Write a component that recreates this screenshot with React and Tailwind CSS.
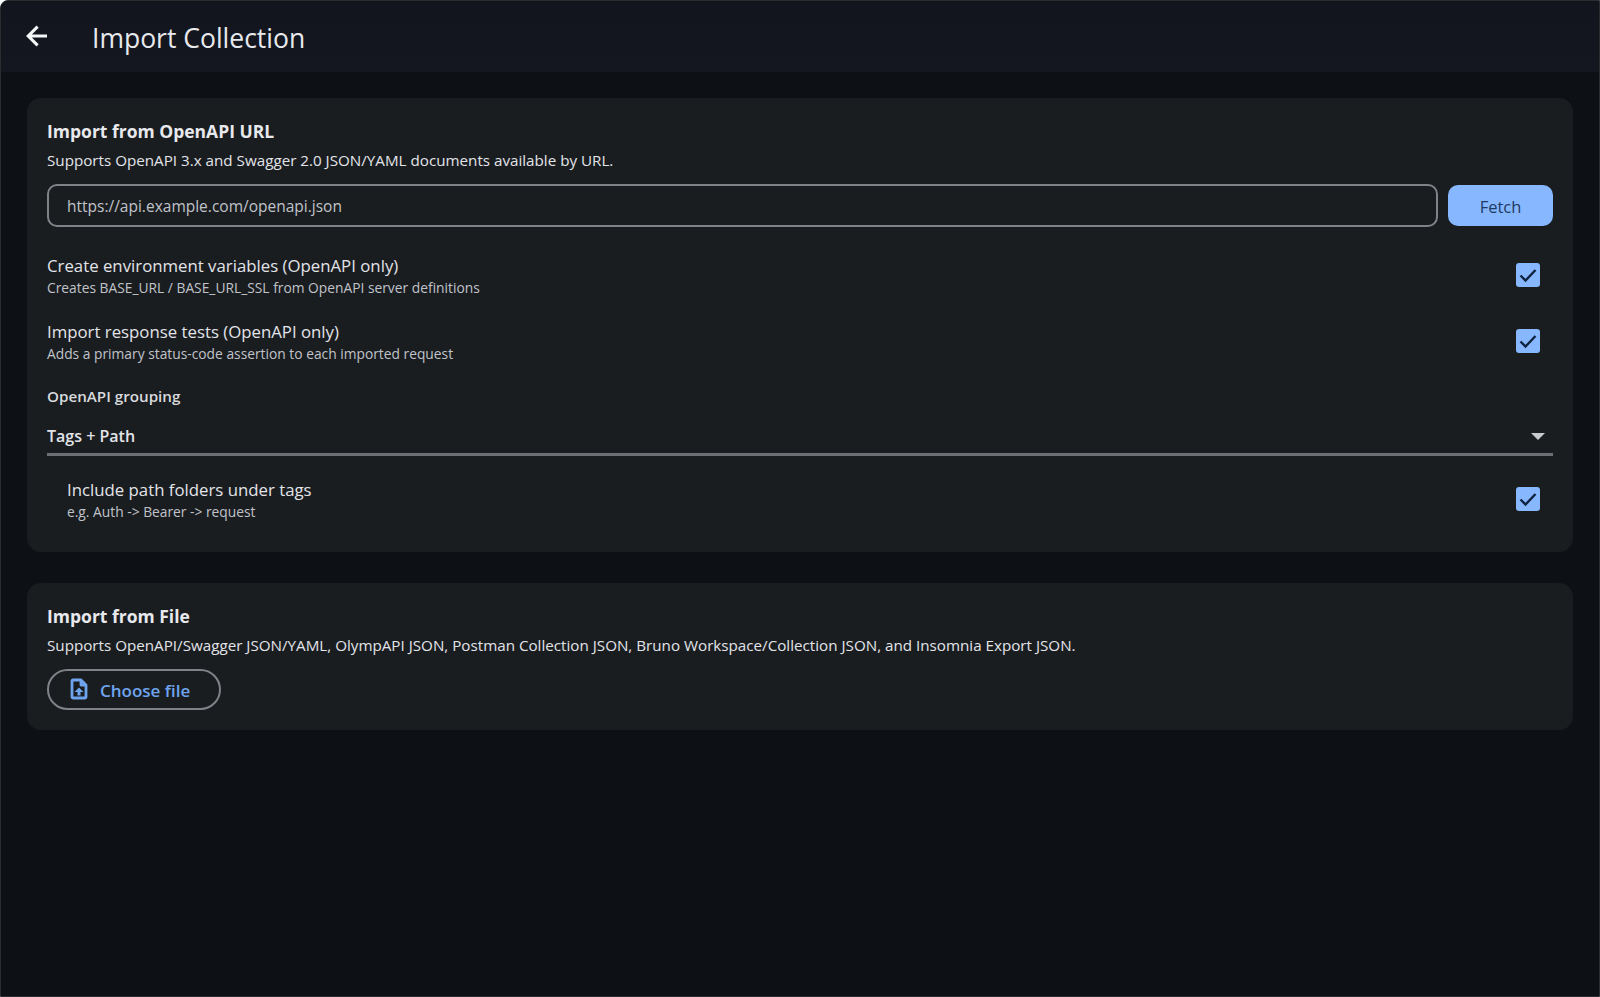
const FONT = { fontFamily: '"Open Sans", "Noto Sans", sans-serif' };

function CheckRow({ title, sub, indent }) {
  return (
    <div className={`flex items-center justify-between pr-[13px] ${indent ? "pl-5" : ""}`}>
      <div className="pt-[1px] -mb-[1px]">
        <div className="text-[16.8px] leading-[22px] text-[#e2e4e9]">{title}</div>
        <div className="text-[13.8px] leading-[18px] mt-[2px] text-[#c0c3ca]">{sub}</div>
      </div>
      <div className="w-6 h-6 rounded-[3px] bg-[#86b7ff] flex items-center justify-center">
        <svg viewBox="0 0 24 24" className="w-6 h-6" fill="none" stroke="#10233f" strokeWidth="2.4">
          <path d="M4.5 12.5l5 5 10-10.5" />
        </svg>
      </div>
    </div>
  );
}

export default function App() {
  return (
    <div style={FONT} className="w-[1600px] h-[997px] overflow-hidden bg-[#0d1014] border border-[#2a2c30] rounded-tl-lg text-[#e2e4e9]">
      <header className="h-[71px] bg-gradient-to-b from-[#12151e] to-[#14171f] flex items-center pl-[21px]">
        <svg viewBox="0 0 24 24" className="w-[30px] h-[30px] -mt-[1px]" fill="none" stroke="#f4f5f7" strokeWidth="2.5">
          <path d="M20 12H5M12.5 4.5L5 12l7.5 7.5" />
        </svg>
        <h1 className="ml-[40px] text-[26.5px] leading-none text-[#e8e9ed] mt-[3px]">Import Collection</h1>
      </header>

      <main className="px-[26px] pt-[26px] flex flex-col gap-[31px]">
        <section className="bg-[#1a1d20] rounded-[14px] p-5 pb-[32px]">
          <h2 className="text-[17.5px] leading-[24px] font-bold text-[#e8e9ed] mt-[1px]">Import from OpenAPI URL</h2>
          <p className="text-[15.2px] leading-[20px] mt-[7px] text-[#e2e4e9]">Supports OpenAPI 3.x and Swagger 2.0 JSON/YAML documents available by URL.</p>
          <div className="flex gap-[10px] mt-[14px]">
            <div className="flex-1 h-[43px] border-2 border-[#7f8286] rounded-[10px] pl-[18px] pr-5 pt-[2px] flex items-center text-[15.5px] text-[#c0c3ca]">
              https://api.example.com/openapi.json
            </div>
            <button className="w-[105px] h-[41px] mt-[1px] pt-[4px] rounded-[10px] bg-[#86b7ff] text-[16.5px] text-[#1e3a63]">Fetch</button>
          </div>
          <div className="mt-[27px] flex flex-col gap-[24px]">
            <CheckRow title="Create environment variables (OpenAPI only)" sub="Creates BASE_URL / BASE_URL_SSL from OpenAPI server definitions" />
            <CheckRow title="Import response tests (OpenAPI only)" sub="Adds a primary status-code assertion to each imported request" />
          </div>
          <div className="text-[15.2px] leading-[20px] font-semibold mt-[24px] text-[#d8dade]">OpenAPI grouping</div>
          <div className="mt-[13px] h-[37px] border-b-[3px] border-[#6c6f74] flex items-center justify-between pr-[8px]">
            <span className="text-[16px] font-semibold text-[#e2e4e9]">Tags + Path</span>
            <span className="w-0 h-0 border-x-[7px] border-x-transparent border-t-[7px] border-t-[#c8cace]" />
          </div>
          <div className="mt-[22px]">
            <CheckRow indent title="Include path folders under tags" sub="e.g. Auth -> Bearer -> request" />
          </div>
        </section>

        <section className="bg-[#1a1d20] rounded-[14px] p-5">
          <h2 className="text-[17.5px] leading-[24px] font-bold text-[#e8e9ed] mt-[1px]">Import from File</h2>
          <p className="text-[15.2px] leading-[20px] mt-[7px] text-[#e2e4e9]">Supports OpenAPI/Swagger JSON/YAML, OlympAPI JSON, Postman Collection JSON, Bruno Workspace/Collection JSON, and Insomnia Export JSON.</p>
          <button className="mt-[14px] w-[174px] h-[41px] border-2 border-[#7f8286] rounded-full flex items-center pl-[18px] gap-[9px] text-[17px] font-semibold text-[#6ea4ee]">
            <svg viewBox="0 0 24 24" className="w-[24px] h-[24px] -mt-[2px]" fill="none" stroke="currentColor" strokeWidth="2.8" strokeLinejoin="round">
              <path d="M6 3h8l5 5v12a1 1 0 0 1-1 1H6a1 1 0 0 1-1-1V4a1 1 0 0 1 1-1z" />
              <path d="M14 3v5h5" />
              <path d="M12 10.5l-4.5 4.5h3v3.5h3V15h3z" fill="currentColor" stroke="none" />
            </svg>
            <span className="pt-[2px]">Choose file</span>
          </button>
        </section>
      </main>
    </div>
  );
}
